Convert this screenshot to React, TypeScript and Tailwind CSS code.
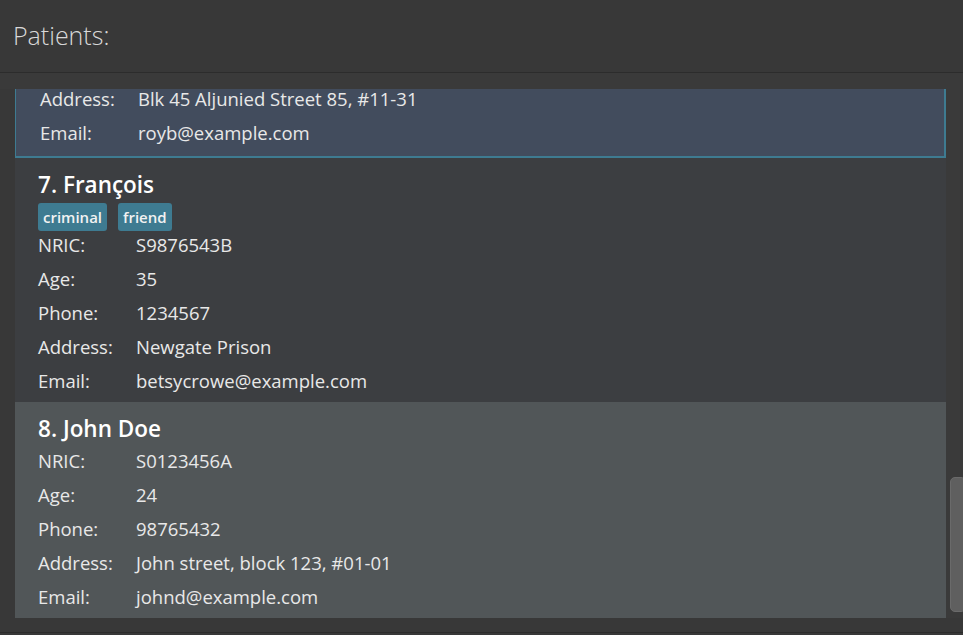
import React from "react";

type Person = {
  idx: number;
  name: string;
  tags: string[];
  nric: string;
  age: string;
  phone: string;
  address: string;
  email: string;
};

const FONT = { fontFamily: '"Open Sans", "Noto Sans", sans-serif' };

function Row({ label, value }: { label: string; value: string }) {
  return (
    <div className="flex h-[34px] items-center text-[18.5px] text-[#e8e8e8]">
      <div className="w-[98px] shrink-0">{label}</div>
      <div>{value}</div>
    </div>
  );
}

function Card({ p, bg }: { p: Person; bg: string }) {
  return (
    <div className={"flex flex-col pb-[4px] pl-[23px] " + bg}>
      <div className="mt-[12px] h-[30px] text-[22.5px] font-semibold leading-[30px] text-white">
        {p.idx}. {p.name}
      </div>
      {p.tags.length > 0 && (
        <div className="mt-[3px] mb-[-3px] flex gap-[11px]">
          {p.tags.map((t) => (
            <div
              key={t}
              className="flex h-[28px] items-center rounded-[3px] bg-[#3e7b91] px-[5px] text-[15px] font-semibold text-[#f2f2f2]"
            >
              {t}
            </div>
          ))}
        </div>
      )}
      <Row label="NRIC:" value={p.nric} />
      <Row label="Age:" value={p.age} />
      <Row label="Phone:" value={p.phone} />
      <Row label="Address:" value={p.address} />
      <Row label="Email:" value={p.email} />
    </div>
  );
}

const francois: Person = {
  idx: 7,
  name: "François",
  tags: ["criminal", "friend"],
  nric: "S9876543B",
  age: "35",
  phone: "1234567",
  address: "Newgate Prison",
  email: "betsycrowe@example.com",
};
const john: Person = {
  idx: 8,
  name: "John Doe",
  tags: [],
  nric: "S0123456A",
  age: "24",
  phone: "98765432",
  address: "John street, block 123, #01-01",
  email: "johnd@example.com",
};

export default function App() {
  return (
    <div className="flex h-[635px] w-[963px] flex-col bg-[#383838]" style={FONT}>
      <div className="flex h-[73px] shrink-0 items-center border-b border-[#2c2c2c] bg-[#383838] pl-[13px]">
        <span className="text-[25px] font-light text-[#d8d8d8]">Patients:</span>
      </div>
      <div className="flex h-[559px] shrink-0 flex-col bg-[#3a3a3a] pt-[16px]">
        <div className="flex h-[529px] shrink-0">
          <div className="w-[15px] shrink-0 bg-[#383838]" />
          <div className="h-[529px] w-[931px] shrink-0 overflow-hidden bg-[#383838]">
            <div className="-mt-[7px] flex flex-col border-b-2 border-l border-r-2 border-[#3e7b91] bg-[#424c5d] pb-[6px] pl-[24px]">
              <Row label="Address:" value="Blk 45 Aljunied Street 85, #11-31" />
              <Row label="Email:" value="royb@example.com" />
            </div>
            <Card p={francois} bg="bg-[#3c3e41]" />
            <Card p={john} bg="bg-[#515658]" />
          </div>
          <div className="relative w-[17px] shrink-0 bg-[#3a3a3a]">
            <div className="absolute left-[4px] top-[388px] h-[135px] w-[16px] rounded-[5px] border border-[#6a6a6a] bg-[#5f5f5f]" />
          </div>
        </div>
        <div className="h-[14px] shrink-0 bg-[#383838]" />
      </div>
      <div className="h-[3px] shrink-0 border-t border-[#2c2c2c] bg-[#383838]" />
    </div>
  );
}
